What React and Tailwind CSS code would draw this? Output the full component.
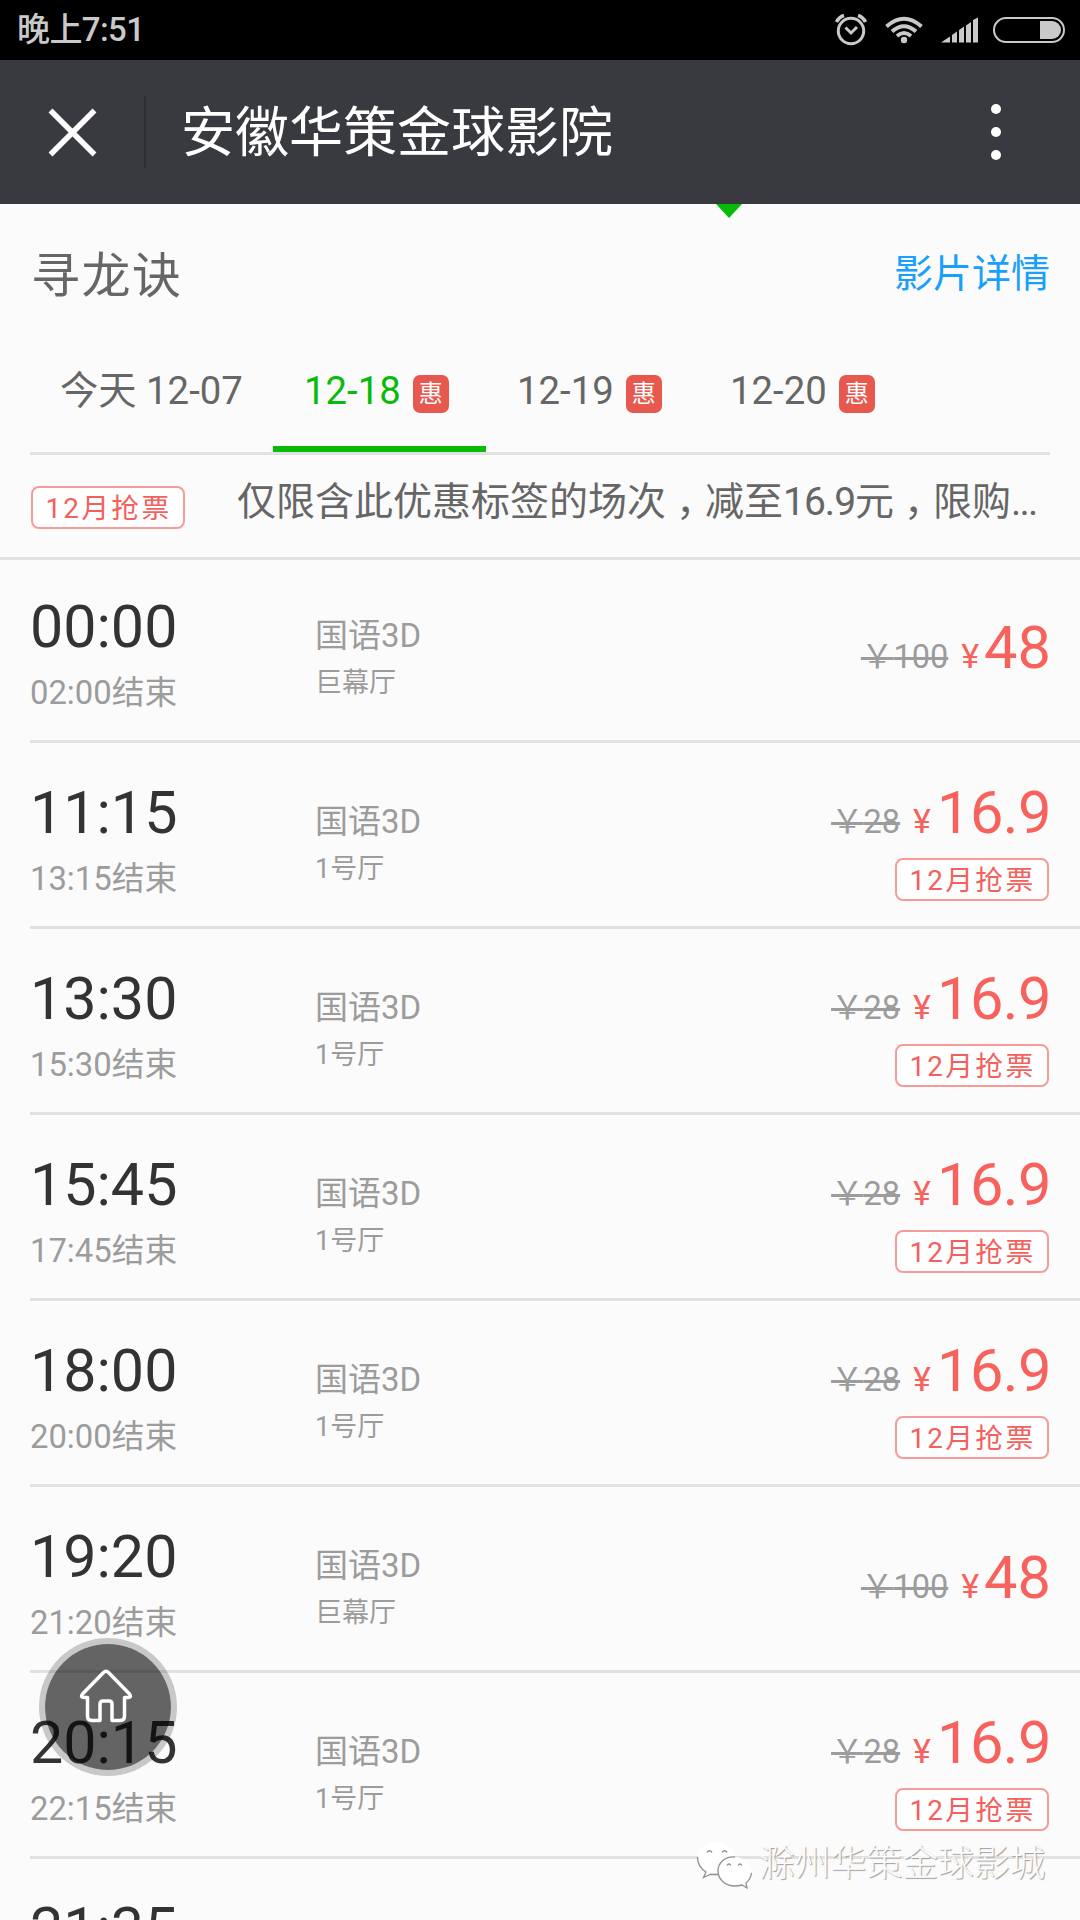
const sessions = [
  { start: "00:00", end: "02:00", lang: "国语3D", hall: "巨幕厅", old: "100", price: "48" },
  { start: "11:15", end: "13:15", lang: "国语3D", hall: "1号厅", old: "28", price: "16.9", tag: "12月抢票" },
  { start: "13:30", end: "15:30", lang: "国语3D", hall: "1号厅", old: "28", price: "16.9", tag: "12月抢票" },
  { start: "15:45", end: "17:45", lang: "国语3D", hall: "1号厅", old: "28", price: "16.9", tag: "12月抢票" },
  { start: "18:00", end: "20:00", lang: "国语3D", hall: "1号厅", old: "28", price: "16.9", tag: "12月抢票" },
  { start: "19:20", end: "21:20", lang: "国语3D", hall: "巨幕厅", old: "100", price: "48" },
  { start: "20:15", end: "22:15", lang: "国语3D", hall: "1号厅", old: "28", price: "16.9", tag: "12月抢票" },
];

function StatusBar() {
  return (
    <div className="flex h-[60px] items-center justify-between bg-black pl-[17px] pr-[15px] text-[#c9c9c9]">
      <span className="text-[33px] font-medium leading-[60px] tracking-[-0.600px]">晚上7:51</span>
      <div className="flex items-center">
        <svg className="h-[34px] w-[34px]" viewBox="0 0 34 34" fill="none" stroke="#c9c9c9" strokeWidth="3">
          <circle cx="17" cy="18" r="12.700" />
          <path d="M11.500 14.500 L17 20 L23 14" />
          <path d="M2.500 9 Q5 4 10 2.500" strokeWidth="3.500" />
          <path d="M24 2.500 Q29 4 31.500 9" strokeWidth="3.500" />
        </svg>
        <svg className="ml-[17px] h-[28px] w-[38px]" viewBox="0 0 38 28" fill="none" stroke="#c9c9c9" strokeWidth="4">
          <path d="M1.500 10.500 Q19 -5 36.500 10.500" />
          <path d="M7 15.500 Q19 5 31 15.500" />
          <path d="M12 20 Q19 14 26 20" />
          <circle cx="19" cy="24" r="3.200" fill="#c9c9c9" stroke="none" />
        </svg>
        <svg className="ml-[18px] h-[26px] w-[37px]" viewBox="0 0 37 26" fill="#c9c9c9">
          <path d="M0 25.500 L9 19.500 V25.500 Z" />
          <path d="M11 18 L16 14.500 V25.500 H11 Z" />
          <path d="M18 13 L23 9.500 V25.500 H18 Z" />
          <path d="M25 8.500 L30 5 V25.500 H25 Z" />
          <path d="M32 3 L37 0.500 V25.500 H32 Z" />
        </svg>
        <div className="ml-[15px] h-[26px] w-[72px] rounded-full border-2 border-[#c9c9c9] p-[2px]">
          <div className="ml-auto h-full w-[21px] rounded-r-full bg-[#c9c9c9]" />
        </div>
      </div>
    </div>
  );
}

function Header() {
  return (
    <div className="flex h-[144px] items-center bg-[#393a3f] text-white">
      <svg className="ml-[48px] h-[49px] w-[49px]" viewBox="0 0 49 49" stroke="#fff" strokeWidth="5.500">
        <path d="M2.500 2.500 L46.500 46.500 M46.500 2.500 L2.500 46.500" />
      </svg>
      <div className="ml-[47px] h-[72px] w-[2px] bg-[#2e2f33]" />
      <h1 className="ml-[35px] mt-[4px] text-[54px] leading-[140px]">安徽华策金球影院</h1>
      <div className="ml-auto mr-[79px] flex flex-col gap-[13px]">
        <i className="h-[10px] w-[10px] rounded-full bg-white" />
        <i className="h-[10px] w-[10px] rounded-full bg-white" />
        <i className="h-[10px] w-[10px] rounded-full bg-white" />
      </div>
    </div>
  );
}

function Tag({ children }) {
  return (
    <span className="flex h-[43px] w-[154px] shrink-0 items-center justify-center rounded-[8px] border-2 border-[#f79a9a] bg-white pl-[1px] pt-[2px] text-[27.800px] leading-[38px] tracking-[2.300px] text-[#f4605c]">
      {children}
    </span>
  );
}

function DateTab({ label, active, promo }) {
  return (
    <div
      className={
        "flex h-[100px] items-start " +
        (promo ? "w-[213px] pl-[31px] " : "w-[243px] pl-[30px] ") +
        (active ? "border-b-[6px] border-[#09bb07] text-[#09bb07]" : "")
      }
    >
      <span className="text-[38.300px] leading-[78px]">{label}</span>
      {promo && (
        <i className="ml-[12px] mt-[23px] flex h-[38px] w-[36px] items-center justify-center rounded-[7px] bg-[#e7584e] text-[24px] leading-none text-white not-italic">
          惠
        </i>
      )}
    </div>
  );
}

function Comma() {
  return <span className="inline-block w-[39px] pl-[10px] [font-feature-settings:'halt']">，</span>;
}

function Session({ item }) {
  return (
    <div className="ml-[30px] flex h-[186px] border-b-[3px] border-[#e1e1e1] pr-[31px]">
      <div className="w-[285px]">
        <div className="mt-[35px] text-[59.200px] leading-[70px] text-[#333]">{item.start}</div>
        <div className="mt-[11px] text-[32.800px] leading-[40px] text-[#9c9c9c]">{item.end}结束</div>
      </div>
      <div className="text-[#9c9c9c]">
        <div className="mt-[59px] text-[33px] leading-[40px]">{item.lang}</div>
        <div className="mt-[10px] text-[27px] leading-[34px]">{item.hall}</div>
      </div>
      <div className={"ml-auto flex flex-col items-end " + (item.tag ? "pt-[35px]" : "pt-[56px]")}>
        <div className="-mr-[2px] flex items-baseline leading-[70px] text-[#f7625d]">
          <s className="text-[32.500px] text-[#9c9c9c] decoration-[3px]">￥{item.old}</s>
          <span className="ml-[13px] text-[34px]">¥</span>
          <span className={"text-[59.500px] " + (item.tag ? "ml-[6px] tracking-[-0.500px]" : "ml-[5px]")}>{item.price}</span>
        </div>
        {item.tag && (
          <div className="mt-px">
            <Tag>{item.tag}</Tag>
          </div>
        )}
      </div>
    </div>
  );
}

function HomeButton() {
  return (
    <button className="absolute left-[39px] top-[1638px] flex h-[138px] w-[138px] justify-center rounded-full border-[6px] border-black/20 bg-black/60 bg-clip-padding pt-[25px]">
      <svg className="-ml-[4px] h-[54px] w-[54px]" viewBox="0 0 54 54" fill="none" stroke="#fff" strokeWidth="3.500" strokeLinejoin="round">
        <path d="M24.500 3.500 Q27 1 29.500 3.500 L50.500 25 Q53 28.500 49.500 28.500 H45.500 V47 Q45.500 51.500 41 51.500 H33 V35 Q33 32 30 32 H24 Q21 32 21 35 V51.500 H13 Q8.500 51.500 8.500 47 V28.500 H4.500 Q1 28.500 3.500 25 Z" />
      </svg>
    </button>
  );
}

function Watermark() {
  return (
    <div className="absolute left-[696px] top-[1840px] flex items-start">
      <svg className="h-[50px] w-[58px]" viewBox="0 0 58 50">
        <g fill="#fff">
          <path d="M20 2 C9 2 1.500 9 1.500 18 C1.500 24 5 29 10 32 L8 38 L15 34.500 C30 37 39 28 39 18 C39 9 30 2 20 2 Z" />
          <path d="M38 17 C28.500 17 22 23.500 22 31 C22 39 29 46 39 46 C42 46 44 45.500 46 45 L51 48 L50 43 C53.500 40 55.500 36 55.500 31 C55.500 23.500 47.500 17 38 17 Z" />
        </g>
        <g fill="none" stroke="#909090" strokeWidth="1.300">
          <path d="M1.500 17 C1.500 24 5 29 10 32 L7.500 37.500 L14 34.500 L22 34.500" />
          <path d="M39 17 C28.500 16 22 23.500 22 31 C22 39 29 46 39 46 C42 46 44 45.500 46 45 L51 48 L50 43 C53.500 40 55 37 55.500 33" />
          <path d="M11 12.500 Q13.500 9 16 12.500 M26 12.500 Q28.500 9 31 12.500" />
          <path d="M31 25.500 Q33 22.500 35 25.500 M42 25.500 Q44 22.500 46 25.500" />
        </g>
      </svg>
      <span className="ml-[5px] whitespace-nowrap text-[35.800px] font-light leading-[48px] text-[#fcfcfc] [text-shadow:1px_1px_1px_#9a9a9a]">滁州华策金球影城</span>
    </div>
  );
}

export default function App() {
  return (
    <div className="relative h-[1920px] w-[1080px] overflow-hidden bg-[#fbfbfb] text-[#666] [font-family:Roboto,'Noto_Sans_CJK_SC',sans-serif]">
      <StatusBar />
      <Header />
      <div className="mx-[30px] h-[148px]">
        <svg className="ml-[686px] h-[14px] w-[26px]" viewBox="0 0 26 14" fill="#09bb07">
          <path d="M0 0 H26 L13 14 Z" />
        </svg>
        <div className="flex items-start justify-between">
          <h2 className="ml-px text-[49px] leading-[118px] tracking-[1.500px]">寻龙诀</h2>
          <a className="text-[39px] leading-[113px] text-[#1a9ffa]">影片详情</a>
        </div>
      </div>

      <div className="mx-[30px] flex h-[103px] border-b-[3px] border-[#e1e1e1]">
        <DateTab label="今天 12-07" />
        <DateTab label="12-18" active promo />
        <DateTab label="12-19" promo />
        <DateTab label="12-20" promo />
      </div>

      <div className="flex h-[102px] items-start pl-[31px] pt-[31px]">
        <Tag>12月抢票</Tag>
        <p className="-mt-[9px] ml-[52px] whitespace-nowrap text-[39px] leading-[50px]">
          仅限含此优惠标签的场次<Comma />减至
          <span className="tracking-[-1px]">16.9</span>元<Comma />限购
          <span className="tracking-[-1.800px]">...</span>
        </p>
      </div>
      <div className="h-[3px] bg-[#e1e1e1]" />

      <div className="-mt-[3px]">
        {sessions.map((item) => (
          <Session key={item.start} item={item} />
        ))}
        <div className="ml-[30px] pt-[35px] text-[59.200px] leading-[70px] text-[#333]">21:35</div>
      </div>

      <HomeButton />
      <Watermark />
    </div>
  );
}
